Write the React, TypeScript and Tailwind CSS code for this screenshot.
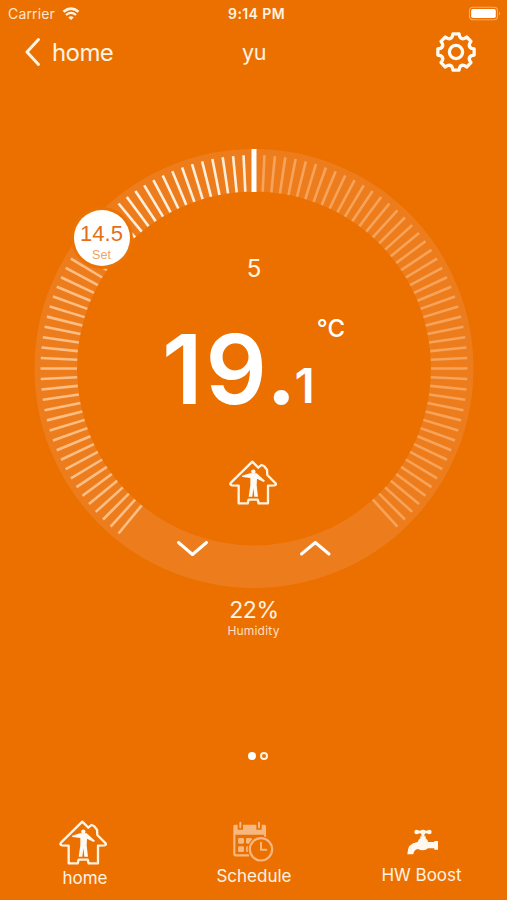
const CX = 220;
const CY = 220.5;
const STEP = 2.8125;
const SET_INDEX = -17;

function polar(r: number, deg: number) {
  const a = (deg * Math.PI) / 180;
  return { x: CX + r * Math.sin(a), y: CY - r * Math.cos(a) };
}

function DialRing() {
  const ticks = Array.from({ length: 100 }, (_, i) => i - 50).filter((i) => i !== 0);
  return (
    <svg className="absolute inset-0" width="440" height="440" viewBox="0 0 440 440">
      <circle cx={CX} cy={CY} r="198.2" fill="none" stroke="#ed7d1c" strokeWidth="42.5" />
      {ticks.map((i) => {
        const a = polar(177, i * STEP);
        const b = polar(213.5, i * STEP);
        const color = i > 0 ? "#f7a35a" : i >= SET_INDEX ? "#ffeed9" : "#fcbe85";
        return <line key={i} x1={a.x} y1={a.y} x2={b.x} y2={b.y} stroke={color} strokeWidth="2.6" />;
      })}
      <rect x="217.5" y="1" width="5" height="43" fill="#fff" />
      <circle cx="68" cy="90" r="31" fill="#eb7305" />
      <path d="M144.500 394.500 L158.500 406.500 L172.500 394.500" fill="none" stroke="#fff" strokeWidth="3" strokeLinecap="round" strokeLinejoin="round" />
      <path d="M267.500 406 L281.300 394.500 L295 406" fill="none" stroke="#fff" strokeWidth="3" strokeLinecap="round" strokeLinejoin="round" />
    </svg>
  );
}

function House() {
  return (
    <svg width="50" height="47" viewBox="40 26 150 141" className="block">
      <path
        d="M113 34 L131 52 L140 44 L148 47 L157 58 L158 74 L183 99 Q186 104 179 105 L160 106 L160 159 L132 159 L129 148 L102 148 L99 159 L72 159 L72 106 L52 105 Q44 103 49 97 Z"
        fill="none"
        stroke="#fff3e2"
        strokeWidth="7"
        strokeLinejoin="round"
      />
      <circle cx="116" cy="64" r="6.500" fill="#fffaf3" />
      <path
        d="M82 76 L106 69 L126 69 L151 91 L147 95 L127 85 L126 105 L130 139 L119 139 L116 114 L113 139 L102 139 L107 105 L107 83 L83 80 Z"
        fill="#fffaf3"
      />
    </svg>
  );
}

function Gear() {
  const pt = (r: number, deg: number) => {
    const a = (deg * Math.PI) / 180;
    return `${(21 + r * Math.sin(a)).toFixed(2)} ${(21 - r * Math.cos(a)).toFixed(2)}`;
  };
  let d = "";
  for (let k = 0; k < 8; k++) {
    const t = k * 45;
    d += `${k === 0 ? "M" : "L"}${pt(18.4, t - 9.5)} L${pt(18.4, t + 9.5)} L${pt(16, t + 13)} Q${pt(13.4, t + 22.5)} ${pt(16, t + 32)} `;
  }
  return (
    <svg width="42" height="42" viewBox="0 0 42 42" className="block">
      <path d={d + "Z"} fill="none" stroke="#fffaf2" strokeWidth="3.300" strokeLinejoin="round" />
      <circle cx="21" cy="21" r="6.600" fill="none" stroke="#fffaf2" strokeWidth="3.300" />
    </svg>
  );
}

function Calendar() {
  return (
    <svg width="42" height="42" viewBox="82 32 126 126" className="block">
      <path d="M86 48 Q86 43 91 43 H99 V58 H115 V43 H155 V58 H171 V43 H180 Q184 43 184 48 V73 H86 Z" fill="#f7b780" />
      <path d="M107 37 V51 M163 37 V51" stroke="#f7b780" strokeWidth="6" strokeLinecap="round" />
      <path d="M89 72 V130 Q89 135 94 135 H134 M181 72 V84" fill="none" stroke="#f7b780" strokeWidth="6.500" />
      <rect x="100" y="83" width="18" height="17" rx="4" fill="#f7b780" />
      <rect x="124" y="83" width="18" height="17" rx="4" fill="#f7b780" />
      <rect x="148" y="83" width="18" height="17" rx="4" fill="#f7b780" />
      <rect x="100" y="108" width="18" height="17" rx="4" fill="#f7b780" />
      <rect x="124" y="108" width="18" height="17" rx="4" fill="#f7b780" />
      <circle cx="169" cy="117" r="40" fill="#eb7000" />
      <circle cx="169" cy="117" r="33.500" fill="none" stroke="#f7b780" strokeWidth="6.500" />
      <path d="M169 97 V118 H185" fill="none" stroke="#f7b780" strokeWidth="6" strokeLinecap="round" />
    </svg>
  );
}

function Tap() {
  return (
    <svg width="34" height="28" viewBox="108 54 102 84" className="block">
      <g fill="#fff8ee">
        <circle cx="140" cy="66" r="7" />
        <circle cx="178" cy="66" r="7" />
        <rect x="140" y="62" width="38" height="8" />
        <ellipse cx="159" cy="66" rx="8" ry="7" />
        <rect x="154.500" y="68" width="9" height="12" />
        <path d="M151 79 H167 V85 Q174 90 174 96 H193 V93 H204 V119 H193 V115 H174 Q168 121 159 121 Q150 121 144 117 Q131 119 130 133 H112 Q112 99 143 96 Q145 89 151 85 Z" />
      </g>
    </svg>
  );
}

function StatusBar() {
  return (
    <div className="grid h-[27px] grid-cols-3 items-center text-[13px] leading-none">
      <div className="flex items-center gap-[6px] pl-[8px] text-[#ffe6cd]">
        <span className="w-[48px] whitespace-nowrap text-[14px] tracking-[0.15px]">Carrier</span>
        <svg width="18" height="14" viewBox="0 0 18 14" className="block">
          <path d="M1.500 4.800 Q9 -1.500 16.500 4.800" fill="none" stroke="#fff3e2" strokeWidth="2.500" />
          <path d="M4 8 Q9 3.700 14 8" fill="none" stroke="#fff3e2" strokeWidth="2.300" />
          <path d="M9 13 L6.300 10.400 Q9 8 11.700 10.400 Z" fill="#fff3e2" />
        </svg>
      </div>
      <div className="flex justify-center pl-[6px] pt-[1px] font-semibold text-[#fff3e2]">
        <span className="whitespace-nowrap text-[14px] tracking-[0.4px]">9:14 PM</span>
      </div>
      <div className="flex justify-end pr-[6px]">
        <svg width="33" height="15" viewBox="0 0 33 15" className="block">
          <rect x="1.500" y="1.200" width="28" height="12.600" rx="3.500" fill="none" stroke="#f5b070" strokeWidth="1.100" />
          <rect x="3.200" y="3" width="24.600" height="9" rx="1.800" fill="#fff" />
          <path d="M31 5.500 Q33 7.500 31 9.500 Z" fill="#f5b070" />
        </svg>
      </div>
    </div>
  );
}

export default function App() {
  return (
    <div className="flex h-[900px] w-[507px] flex-col overflow-hidden bg-[#eb7000] font-['Inter',sans-serif] text-[#fff3e2]">
      <StatusBar />
      <header className="grid h-[50px] grid-cols-[207px_94px_206px] items-center text-[24px] leading-none">
        <div className="flex items-center gap-[11px] pl-[24px]">
          <svg width="17" height="30" viewBox="0 0 17 30" className="block">
            <path d="M14.500 2.500 L3 15 L14.500 27.500" fill="none" stroke="#fff3e2" strokeWidth="3" strokeLinecap="round" strokeLinejoin="round" />
          </svg>
          <span className="pt-[2px] tracking-[-0.6px]">home</span>
        </div>
        <div className="pt-[2px] text-center text-[21.500px] tracking-[-0.300px]">yu</div>
        <div className="flex justify-end pr-[30px]">
          <Gear />
        </div>
      </header>

      <main className="flex flex-1 flex-col items-center">
        <section className="relative mt-[71px] h-[440px] w-[440px]">
          <DialRing />
          <div className="absolute left-[40px] top-[62px] flex h-[56px] w-[56px] flex-col items-center rounded-full bg-white font-['Liberation_Sans',sans-serif] leading-none text-[#e2701a]">
            <span className="mt-[13px] text-[22px]">14.5</span>
            <span className="mt-[4px] text-[12.500px] text-[#f0a468]">Set</span>
          </div>
          <div className="relative flex h-full flex-col items-center">
            <div className="mt-[109px] pl-[1px] text-[24px] leading-[24px]">5</div>
            <div className="mt-[34px] flex h-[104px] items-start text-white">
              <span className="mt-[6px] text-[96px] font-semibold leading-[96px]">
                <span className="tracking-[3px]">1</span>9<span className="-ml-[1px]">.</span>
              </span>
              <span className="-ml-[2px] mt-[47px] text-[48px] font-semibold leading-[48px]">1</span>
              <span className="ml-[2px] mt-[2px] text-[24px] font-medium leading-[24px]">°C</span>
            </div>
            <div className="mr-[1px] mt-[40px]">
              <House />
            </div>
          </div>
        </section>

        <div className="mt-[10px] pl-[1px] text-[23px] leading-[24px] tracking-[-0.300px]">22%</div>
        <div className="mt-[2px] text-[12px] leading-[14px] tracking-[0.200px] text-[#ffdfbf]">Humidity</div>
        <div className="mt-[114px] flex items-center gap-[4px] pl-[9px]">
          <span className="h-[8px] w-[8px] rounded-full bg-white" />
          <span className="h-[8px] w-[8px] rounded-full border-2 border-[#fff3e2]" />
        </div>
      </main>

      <nav className="grid h-[82px] grid-cols-[169px_170px_168px] text-[17px] leading-[20px]">
        <div className="flex flex-col items-center">
          <div className="mr-[3px] pt-[1px]">
            <House />
          </div>
          <span className="mt-[2px] pl-[1px]">home</span>
        </div>
        <div className="flex flex-col items-center pt-[3px]">
          <div className="mr-[2px]">
            <Calendar />
          </div>
          <span className="mt-[3px]">Schedule</span>
        </div>
        <div className="flex flex-col items-center pt-[10px]">
          <Tap />
          <span className="mt-[9px] pr-[3px]">HW Boost</span>
        </div>
      </nav>
    </div>
  );
}
